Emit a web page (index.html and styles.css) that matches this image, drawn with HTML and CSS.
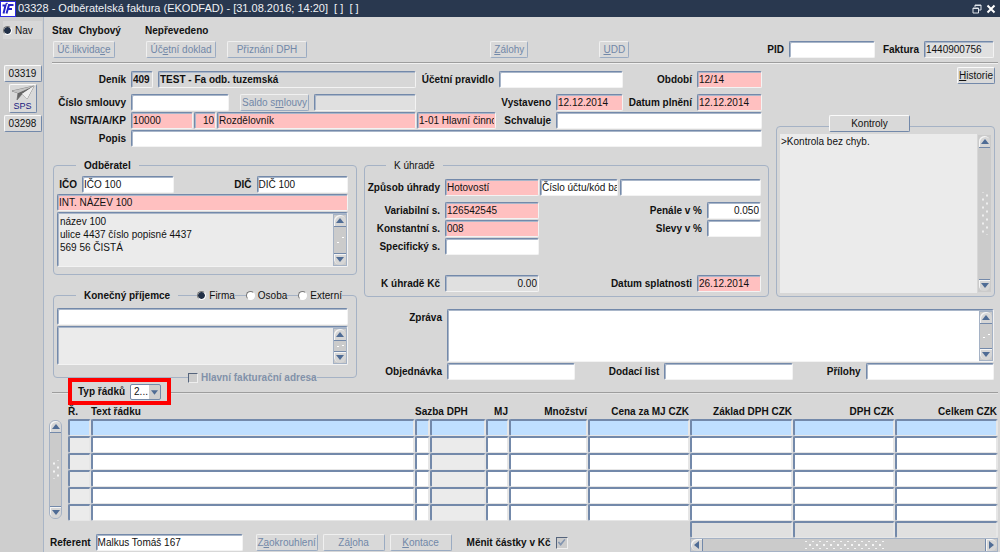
FILE: index.html
```html
<!DOCTYPE html>
<html lang="cs">
<head>
<meta charset="utf-8">
<title>03328 - Odběratelská faktura</title>
<link rel="stylesheet" href="styles.css">
</head>
<body>
<svg class="defs" aria-hidden="true">
  <symbol id="up" viewBox="0 0 8 5"><path d="M0 5L4 0L8 5Z" fill="#4f6c95"/></symbol>
  <symbol id="down" viewBox="0 0 8 5"><path d="M0 0L4 5L8 0Z" fill="#4f6c95"/></symbol>
  <symbol id="left" viewBox="0 0 5 8"><path d="M5 0L0 4L5 8Z" fill="#4f6c95"/></symbol>
  <symbol id="right" viewBox="0 0 5 8"><path d="M0 0L5 4L0 8Z" fill="#4f6c95"/></symbol>
</svg>
<header class="titlebar">
  <svg class="logo" width="16" height="16" viewBox="0 0 16 16" aria-hidden="true">
    <rect x="0.5" y="0.5" width="15" height="15" fill="#fff" stroke="#2a2ae0"/>
    <path d="M2.500 4.500H5.500L3.500 12.500M13.500 4H9L6.500 12.500M8 8H12" fill="none" stroke="#2222c8" stroke-width="2"/>
    <path d="M5.500 3.500L7.500 2" fill="none" stroke="#2222c8" stroke-width="1.500"/>
  </svg>
  <h1>03328 - Odběratelská faktura (EKODFAD) - [31.08.2016; 14:20]&nbsp; [ ]&nbsp; [ ]</h1>
  <button class="win" aria-label="Obnovit"><svg width="10" height="10" viewBox="0 0 10 10"><path d="M3 3V1H9V6H7M3 1.5H9M1 4H6.500V9H1ZM1 4.500H6.500" fill="none" stroke="#dfe3ea" stroke-width="1"/></svg></button>
  <button class="win" aria-label="Zavřít"><svg width="10" height="10" viewBox="0 0 10 10"><path d="M1.500 1.500L8.500 8.500M8.500 1.500L1.500 8.500" stroke="#fff" stroke-width="2"/></svg></button>
</header>
<div class="shell">
  <nav class="side">
    <label class="nav"><input type="radio" name="nav" checked>Nav</label>
    <button class="btn">03319</button>
    <button class="btn sps"><svg width="26" height="17" viewBox="0 0 26 17" aria-hidden="true"><path d="M2 6L24 1L17 14L12 9L7 15L8 8Z" fill="#f4f4f4" stroke="#888" stroke-width="1"/><path d="M2 6L24 1L8 8Z" fill="#c4c4c4"/><path d="M8 8L24 1L12 9L7 15Z" fill="#666"/><path d="M12 9L24 1L17 14Z" fill="#eee"/></svg><span>SPS</span></button>
    <button class="btn">03298</button>
  </nav>
  <main class="main">
    <div class="status"><strong class="state">Stav&nbsp; Chybový</strong><strong>Nepřevedeno</strong></div>
    <div class="toolbar">
      <button class="btn w62" disabled>Úč.likvida<u>c</u>e</button>
      <button class="btn w70 gap-l" disabled>Úč<u>e</u>tní doklad</button>
      <button class="btn w80 gap-s" disabled>Přiznání DPH</button>
      <span class="fill-a"></span>
      <button class="btn w38" disabled><u>Z</u>álohy</button>
      <span class="fill-b"></span>
      <button class="btn w30" disabled><u>U</u>DD</button>
      <span class="fill-c"></span>
      <label for="pid">PID</label><input class="f w86" id="pid">
      <label class="l39" for="fakt">Faktura</label><input class="f ro w70" id="fakt" value="1440900756" readonly>
    </div>
    <div class="form">
      <div class="top">
        <div class="row first">
          <label class="l73" for="denik">Deník</label><input class="f ro b g22" id="denik" value="409" readonly>
          <input class="f ro b g258" aria-label="Název deníku" value="TEST - Fa odb. tuzemská" readonly>
          <label class="l73" for="prav">Účetní pravidlo</label><input class="f g124" id="prav">
          <label class="l64" for="obd">Období</label><input class="f req g65" id="obd" value="12/14">
        </div>
        <div class="row">
          <label class="l73" for="sml">Číslo smlouvy</label><input class="f g98" id="sml">
          <button class="btn w69 saldo" disabled>Saldo s<u>m</u>louvy</button>
          <input class="f ro g102" aria-label="Saldo" readonly>
          <label class="l130" for="vyst">Vystaveno</label><input class="f req g67" id="vyst" value="12.12.2014">
          <label class="l64" for="plneni">Datum plnění</label><input class="f req g65" id="plneni" value="12.12.2014">
        </div>
        <div class="row">
          <label class="l73" for="ns">NS/TA/A/KP</label>
          <div class="joined"><input class="f req g62" id="ns" value="10000"><input class="f req num g22" aria-label="TA" value="10"><input class="f req g199" aria-label="A" value="Rozdělovník"><input class="f req g79" aria-label="KP" value="1-01 Hlavní činnost"></div>
          <label class="l50" for="schv">Schvaluje</label><input class="f g206" id="schv">
        </div>
        <div class="row"><label class="l73" for="popis">Popis</label><input class="f g206" id="popis"></div>
      </div>

      <div class="right">
        <button class="btn hist"><u>H</u>istorie</button>
        <section class="checks">
          <button class="btn checks-btn">Kontroly</button>
          <textarea aria-label="Kontroly" readonly>&gt;Kontrola bez chyb.</textarea>
          <div class="sb bare"><button aria-label="Nahoru"><svg><use href="#up"/></svg></button><i class="grip tall"></i><button aria-label="Dolů"><svg><use href="#down"/></svg></button></div>
        </section>
      </div>

      <div class="left">
        <fieldset class="group customer">
          <legend>Odběratel</legend>
          <div class="row"><label class="l20" for="ico">IČO</label><textarea class="f one g94" id="ico" rows="1">IČO 100</textarea><label class="l73" for="dic">DIČ</label><textarea class="f one g94" id="dic" rows="1">DIČ 100</textarea></div>
          <textarea class="f req one" aria-label="Název" rows="1">INT. NÁZEV 100</textarea>
          <div class="area f h55"><textarea class="grey" aria-label="Adresa" readonly>název 100
ulice 4437 číslo popisné 4437
569 56 ČISTÁ</textarea>
            <div class="sb"><button aria-label="Nahoru"><svg><use href="#up"/></svg></button><i class="grip"></i><button aria-label="Dolů"><svg><use href="#down"/></svg></button></div></div>
        </fieldset>
        <fieldset class="group recipient">
          <legend>Konečný příjemce</legend>
          <div class="kinds"><label><input type="radio" name="kind" checked>Firma</label><label><input type="radio" name="kind">Osoba</label><label><input type="radio" name="kind">Externí</label></div>
          <input class="f" aria-label="Příjemce">
          <div class="area f h39"><textarea class="grey" aria-label="Adresa příjemce" readonly></textarea>
            <div class="sb"><button aria-label="Nahoru"><svg><use href="#up"/></svg></button><i class="grip"></i><button aria-label="Dolů"><svg><use href="#down"/></svg></button></div></div>
          <label class="mainaddr"><input type="checkbox" disabled>Hlavní fakturační adresa</label>
        </fieldset>
      </div>

      <fieldset class="group pay">
        <legend>K úhradě</legend>
        <div class="row tight first"><label class="l75" for="zpus">Způsob úhrady</label><input class="f req w94 after" id="zpus" value="Hotovostí"><textarea class="f one w78" aria-label="Účet" rows="1">Číslo účtu/kód banky</textarea><input class="f g206 two" aria-label="Číslo účtu"></div>
        <div class="row"><label class="l75" for="vs">Variabilní s.</label><input class="f req w94" id="vs" value="126542545"><label class="grow" for="pen">Penále v %</label><input class="f num w54" id="pen" value="0.050"></div>
        <div class="row"><label class="l75" for="ks">Konstantní s.</label><input class="f req w94" id="ks" value="008"><label class="grow" for="slevy">Slevy v %</label><input class="f w54" id="slevy"></div>
        <div class="row"><label class="l75" for="ss">Specifický s.</label><input class="f w94" id="ss"></div>
        <div class="row total"><label class="l75" for="kc">K úhradě Kč</label><input class="f ro num w94" id="kc" value="0.00" readonly><label class="grow" for="spl">Datum splatnosti</label><input class="f req w64" id="spl" value="26.12.2014"></div>
      </fieldset>

      <div class="message">
        <div class="row msg"><label class="l78" for="zpr">Zpráva</label><div class="area f h53"><textarea id="zpr"></textarea><div class="sb"><button aria-label="Nahoru"><svg><use href="#up"/></svg></button><i class="grip"></i><button aria-label="Dolů"><svg><use href="#down"/></svg></button></div></div></div>
        <div class="row"><label class="l78" for="obj">Objednávka</label><input class="f g128" id="obj"><label class="l79" for="dod">Dodací list</label><input class="f g128" id="dod"><label class="l63" for="pri">Přílohy</label><input class="f g128" id="pri"></div>
      </div>
    </div>

    <div class="linetype"><hr class="short"><div class="marked"><label for="typ">Typ řádků</label><span class="combo"><select id="typ"><option>2...</option></select><svg><use href="#down"/></svg></span></div><hr></div>

    <div class="lines">
      <div class="sb round"><button aria-label="Nahoru"><svg><use href="#up"/></svg></button><i class="grip mid"></i><button aria-label="Dolů"><svg><use href="#down"/></svg></button></div>
      <table>
        <colgroup><col class="c23"><col><col class="c15"><col class="c56"><col class="c23"><col class="c79"><col class="c102"><col class="c103"><col class="c102"><col class="c103"></colgroup>
        <thead><tr><th class="st">Ř.</th><th class="st">Text řádku</th><th class="st" colspan="2">Sazba DPH</th><th>MJ</th><th>Množství</th><th>Cena za MJ CZK</th><th>Základ DPH CZK</th><th>DPH CZK</th><th>Celkem CZK</th></tr></thead>
        <tbody>
          <tr class="sel"><td><input aria-label="Ř."></td><td><input aria-label="Text"></td><td><input aria-label="Sazba"></td><td><input aria-label="DPH"></td><td><input aria-label="MJ"></td><td><input aria-label="Množství"></td><td><input aria-label="Cena"></td><td><input aria-label="Základ"></td><td><input aria-label="DPH CZK"></td><td><input aria-label="Celkem"></td></tr>
          <tr><td><input aria-label="Ř."></td><td><input aria-label="Text"></td><td><input aria-label="Sazba"></td><td><input aria-label="DPH"></td><td><input aria-label="MJ"></td><td><input aria-label="Množství"></td><td><input aria-label="Cena"></td><td><input aria-label="Základ"></td><td><input aria-label="DPH CZK"></td><td><input aria-label="Celkem"></td></tr>
          <tr><td><input aria-label="Ř."></td><td><input aria-label="Text"></td><td><input aria-label="Sazba"></td><td><input aria-label="DPH"></td><td><input aria-label="MJ"></td><td><input aria-label="Množství"></td><td><input aria-label="Cena"></td><td><input aria-label="Základ"></td><td><input aria-label="DPH CZK"></td><td><input aria-label="Celkem"></td></tr>
          <tr><td><input aria-label="Ř."></td><td><input aria-label="Text"></td><td><input aria-label="Sazba"></td><td><input aria-label="DPH"></td><td><input aria-label="MJ"></td><td><input aria-label="Množství"></td><td><input aria-label="Cena"></td><td><input aria-label="Základ"></td><td><input aria-label="DPH CZK"></td><td><input aria-label="Celkem"></td></tr>
          <tr><td><input aria-label="Ř."></td><td><input aria-label="Text"></td><td><input aria-label="Sazba"></td><td><input aria-label="DPH"></td><td><input aria-label="MJ"></td><td><input aria-label="Množství"></td><td><input aria-label="Cena"></td><td><input aria-label="Základ"></td><td><input aria-label="DPH CZK"></td><td><input aria-label="Celkem"></td></tr>
          <tr><td><input aria-label="Ř."></td><td><input aria-label="Text"></td><td><input aria-label="Sazba"></td><td><input aria-label="DPH"></td><td><input aria-label="MJ"></td><td><input aria-label="Množství"></td><td><input aria-label="Cena"></td><td><input aria-label="Základ"></td><td><input aria-label="DPH CZK"></td><td><input aria-label="Celkem"></td></tr>
        </tbody>
      </table>
    </div>

    <footer class="bottom">
      <div class="actions">
        <label for="ref">Referent</label><input class="f w147" id="ref" value="Malkus Tomáš 167">
        <button class="btn w62 gap-m" disabled>Z<u>a</u>okrouhlení</button><button class="btn w62" disabled>Zá<u>l</u>oha</button><button class="btn w62" disabled><u>K</u>ontace</button>
        <label class="convert">Měnit částky v Kč<input type="checkbox" checked disabled></label>
      </div>
      <div class="sums">
        <div class="sumrow"><input class="c103" aria-label="Součet základ" readonly><input class="c102" aria-label="Součet DPH" readonly><input class="c103" aria-label="Součet celkem" readonly></div>
        <div class="sb hor"><button aria-label="Vlevo"><svg><use href="#left"/></svg></button><i class="grip wide"></i><button aria-label="Vpravo"><svg><use href="#right"/></svg></button></div>
      </div>
    </footer>
  </main>
</div>
</body>
</html>
```
FILE: styles.css
```css
:root { --bg: #d7d7d7; --edge: #7389aa; --soft: #a5b2c5; --lite: #f3f3f3; --req: #ffc0c0; }
* { box-sizing: border-box; }
body { margin: 0; min-height: 100vh; display: flex; flex-direction: column; background: var(--bg); color: #111; font: 10px/13px "Liberation Sans", Arial, sans-serif; overflow: hidden; }
input, button, textarea, select { font: inherit; color: inherit; margin: 0; }
.defs { position: absolute; width: 0; height: 0; }

.titlebar { display: flex; align-items: center; height: 17px; padding-right: 2px; background: #29384f; color: #f0f2f5; }
.titlebar h1 { flex: 1; margin: 0 0 0 2px; font-size: 11px; line-height: 15px; font-weight: 400; white-space: nowrap; }
.logo { flex: none; }
.win { width: 14px; height: 14px; padding: 0; border: 0; background: none; display: grid; place-items: center; }

.shell { flex: 1; display: flex; }
.side { width: 44px; flex: none; padding: 4px 1px 0 3px; border-right: 1px solid #a9b5c6; background: #cecece; display: flex; flex-direction: column; align-items: center; gap: 2px; }
.nav { width: 100%; height: 18px; margin-bottom: 24px; display: flex; align-items: center; gap: 3px; background: var(--bg); }
.side .btn { width: 38px; color: #111; }
.side .sps { width: 28px; height: 29px; display: flex; flex-direction: column; align-items: center; font-size: 9px; line-height: 9px; color: #1a1a80; }
.side .sps svg { flex: none; }

.main { flex: 1; min-width: 0; display: flex; flex-direction: column; }
label, strong, th { font-weight: 700; white-space: nowrap; }
.side .nav { font-weight: 400; }
.status { display: flex; padding: 7px 0 0 8px; height: 24px; }
.state { width: 93px; }
.toolbar { display: flex; align-items: center; gap: 5px; margin: 0 2px 0 8px; padding: 0 4px 4px 1px; height: 22px; border-bottom: 1px solid #9d9d9d; box-shadow: 0 1px 0 #f0f0f0; }
.fill-a { flex: 176 1 0; } .fill-b { flex: 62 1 0; } .fill-c { flex: 130 1 0; }
.gap-l { margin-left: 26px; } .gap-s { margin-left: 6px; } .gap-m { margin-left: 8px; }
.btn { flex: none; height: 17px; padding: 0; border: 1px solid; border-color: #fafafa var(--edge) var(--edge) #fafafa; border-radius: 2px; background: #d9d9d9; line-height: 14px; text-align: center; white-space: nowrap; }
.btn:disabled { color: #7288a8; border-color: #f0f0f0 #9aabc2 #9aabc2 #f0f0f0; }

.f { height: 17px; min-width: 0; padding: 0 1px; border: 1px solid; border-color: var(--edge) var(--lite) var(--lite) var(--edge); border-radius: 2px; background: #fff; box-shadow: inset 1px 1px 0 #a9b6c9; line-height: 15px; }
.f.ro { background: #e0e0e0; } .f.req { background: var(--req); }
.b { font-weight: 700; } .f.b { background: var(--bg); }
.num { text-align: right; }
.one { flex: none; white-space: pre; }

.form { display: grid; grid-template-columns: 304fr 405fr 219fr; grid-template-rows: 96px auto auto; column-gap: 7px; padding: 0 5px 0 9px; }
.form > * { min-width: 0; }
.top { grid-column: 1 / 3; display: flex; flex-direction: column; gap: 1px; padding: 8px 7px 0 0; }
.row { display: flex; align-items: center; gap: 5px; }
.row label { text-align: right; flex: none; }
.first { margin-bottom: 5px; }
.saldo { margin-left: 6px; }
.joined { flex: 365 1 365px; min-width: 0; display: flex; gap: 1px; }
.right { grid-column: 3; grid-row: 1 / 3; display: flex; flex-direction: column; padding-top: 4px; }
.hist { align-self: flex-end; width: 38px; }
.checks { flex: 1; position: relative; display: flex; gap: 1px; margin-top: 42px; padding: 7px 3px 3px; border: 1px solid var(--soft); border-radius: 4px; }
.checks-btn { position: absolute; top: -12px; left: 52px; width: 81px; }
textarea { display: block; resize: none; overflow: hidden; outline: 0; }
.checks textarea, .area textarea { flex: 1; min-width: 0; padding: 1px 0 0 1px; border: 0; background: #ebebeb; }
.left { grid-column: 1; grid-row: 2 / 4; display: flex; flex-direction: column; gap: 14px; }

.group { position: relative; min-width: 0; margin: 0; border: 1px solid var(--soft); border-radius: 4px; padding: 4px 8px 7px 3px; display: flex; flex-direction: column; gap: 1px; }
.group legend { padding: 0 8px; margin-left: 19px; font-weight: 700; }
.area { display: flex; padding: 1px 0 0 1px; }
.area textarea { background: #fff; line-height: 13px; }
.area .grey { background: #ebebeb; }
.h55 { height: 55px; } .h39 { height: 39px; } .h53 { height: 53px; flex: 1; }
.recipient { padding: 6px 8px 12px 3px; }
.kinds { position: absolute; top: -13px; right: 14px; display: flex; gap: 11px; }
.kinds label { display: flex; align-items: center; gap: 3px; font-weight: 400; background: var(--bg); }
.mainaddr { position: absolute; left: 134px; bottom: -7px; display: flex; align-items: center; gap: 3px; color: #8191a9; background: var(--bg); }
input[type="radio"] { appearance: none; width: 9px; height: 9px; border: 1px solid; border-color: #777 #fff #fff #777; border-radius: 50%; background: #fff; }
input[type="radio"]:checked { background: radial-gradient(circle, #223047 0 3px, #fff 4px); }
input[type="checkbox"] { appearance: none; width: 10px; height: 10px; border: 1px solid; border-color: #55647c #eee #eee #55647c; background: #ccc; }

.pay { grid-column: 2; grid-row: 2; padding: 7px 7px 4px 0; }
.pay legend { margin-left: 21px; font-weight: 400; }
.pay .grow { flex: 1; }
.tight { gap: 1px; } .after { margin-left: 4px; } .two { margin-left: 1px; }
.total { margin-top: 19px; }
.message { grid-column: 2 / 4; grid-row: 3; margin-top: 12px; padding-right: 1px; display: flex; flex-direction: column; gap: 1px; }
.msg { align-items: flex-start; }
.msg label { padding-top: 2px; }

.sb { flex: none; width: 14px; display: flex; flex-direction: column; border: 1px solid var(--soft); background: #cbcbcb; }
.sb button { flex: none; height: 12px; padding: 0; border: 0; border-radius: 6px 6px 0 0; background: #d6d6d6; border-bottom: 1px solid var(--edge); display: grid; place-items: center; box-shadow: inset 1px 1px 0 #f5f5f5; }
.sb button:last-child { border-bottom: 0; border-top: 1px solid var(--edge); border-radius: 0 0 6px 6px; }
.sb svg { width: 8px; height: 5px; }
.grip { flex: 1; display: block; background: radial-gradient(circle, #fff 0 1px, transparent 1px) 1px 60% / 6px 5px no-repeat, radial-gradient(circle, #fff 0 1px, transparent 1px) 6px 40% / 6px 5px no-repeat; }
.bare { width: 13px; border-color: transparent; margin: 1px 0; }
.round { width: 13px; border-radius: 6px; }
.mid { background: radial-gradient(circle at 2px 6px, #f5f5f5 0 1px, transparent 1px) center / 8px 8px repeat-y, radial-gradient(circle at 6px 2px, #f5f5f5 0 1px, transparent 1px) center / 8px 8px repeat-y; background-clip: content-box; padding: 27px 0; }
.tall { background: radial-gradient(circle at 2px 6px, #eee 0 1px, transparent 1px) center / 8px 8px repeat-y, radial-gradient(circle at 6px 2px, #eee 0 1px, transparent 1px) center / 8px 8px repeat-y; background-clip: content-box; padding: 44px 0; }
.hor { width: 100%; height: 14px; flex-direction: row; }
.hor button, .hor button:last-child { width: 12px; height: 12px; border: 0; border-right: 1px solid var(--edge); border-radius: 6px 0 0 6px; }
.hor button:last-child { border-right: 0; border-left: 1px solid var(--edge); border-radius: 0 6px 6px 0; }
.hor svg { width: 5px; height: 8px; }
.wide { background: radial-gradient(circle at 2px 6px, #f5f5f5 0 1px, transparent 1px) 0 0 / 7px 8px, radial-gradient(circle at 5px 2px, #f5f5f5 0 1px, transparent 1px) 0 0 / 7px 8px; background-clip: content-box; padding: 2px 33%; }

.linetype { display: flex; align-items: center; margin: -2px 2px 0 8px; }
.linetype hr { flex: 1; height: 2px; margin: 2px 0 0; border: 0; border-top: 1px solid #9d9d9d; border-bottom: 1px solid #e4e4e4; }
.linetype .short { flex: none; width: 16px; }
.marked { display: flex; align-items: center; gap: 5px; height: 27px; padding: 0 6px; border: 4px solid #f00; }
.combo { position: relative; display: flex; }
.combo select { appearance: none; width: 31px; height: 16px; padding: 0 0 0 3px; border: 1px solid var(--edge); border-radius: 2px; background: linear-gradient(90deg, #fff 18px, #cfcfcf 18px); }
.combo svg { position: absolute; right: 3px; top: 6px; width: 7px; height: 5px; pointer-events: none; }

.lines { display: flex; align-items: flex-start; gap: 6px; margin: 0 2px 0 5px; }
.round { height: 99px; margin-top: 15px; }
table { flex: 1; width: 0; table-layout: fixed; border-spacing: 0; }
th, td { padding: 0; }
th { height: 14px; text-align: right; padding: 1px 1px 2px 0; line-height: 11px; }
th.st { text-align: left; }
.c15 { width: 15px; } .c23 { width: 23px; } .c56 { width: 56px; } .c79 { width: 79px; } .c102 { width: 102px; } .c103 { width: 103px; }
td input, .sumrow input { display: block; width: 100%; height: 17px; padding: 0; border: 1px solid; border-width: 2px 2px 1px 2px; border-color: var(--edge) #e6e6e6 #e6e6e6 var(--edge); border-radius: 2px; background: #fff; }
td:nth-child(1) input, td:nth-child(4) input { background: #ebebeb; }
.sel td input, .sel td:nth-child(n) input { background: #bfdfff; }

.bottom { display: flex; justify-content: space-between; padding: 0 2px 0 6px; }
.actions { display: flex; align-items: center; gap: 5px; padding-top: 13px; height: 30px; }
.convert { display: flex; align-items: center; gap: 5px; margin-left: 10px; }
.convert input { width: 12px; height: 12px; display: grid; place-items: center; }
.convert input::after { content: ""; width: 8px; height: 7px; background: #8496b0; clip-path: polygon(0 45%, 20% 35%, 38% 60%, 85% 0, 100% 12%, 40% 100%); }
.sums { width: 308px; flex: none; }
.sumrow { display: flex; }
.sumrow input { background: #e0e0e0; }
.sumrow .c102 { width: 102px; } .sumrow .c103 { width: 103px; }

.w30 { width: 30px; } .w38 { width: 38px; } .w54 { width: 54px; } .w62 { width: 62px; } .w64 { width: 64px; } .w69 { width: 69px; } .w70 { width: 70px; } .w78 { width: 78px; } .w80 { width: 80px; } .w86 { width: 86px; } .w94 { width: 94px; } .w147 { width: 147px; }
.g22 { flex: 22 1 22px; } .g62 { flex: 62 1 62px; } .g65 { flex: 65 1 65px; } .g67 { flex: 67 1 67px; } .g79 { flex: 79 1 79px; } .g94 { flex: 94 1 94px; } .g98 { flex: 98 1 98px; } .g102 { flex: 102 1 102px; } .g124 { flex: 124 1 124px; } .g128 { flex: 128 1 128px; } .g199 { flex: 199 1 199px; } .g206 { flex: 206 1 206px; } .g258 { flex: 258 1 258px; }
.two { flex: 1 1 0; }
.l20 { width: 20px; } .l39 { width: 39px; text-align: right; } .l50 { width: 50px; } .l63 { width: 63px; } .l64 { width: 64px; } .l73 { width: 73px; } .l75 { width: 75px; } .l78 { width: 78px; } .l79 { width: 79px; } .l130 { width: 130px; }
```
